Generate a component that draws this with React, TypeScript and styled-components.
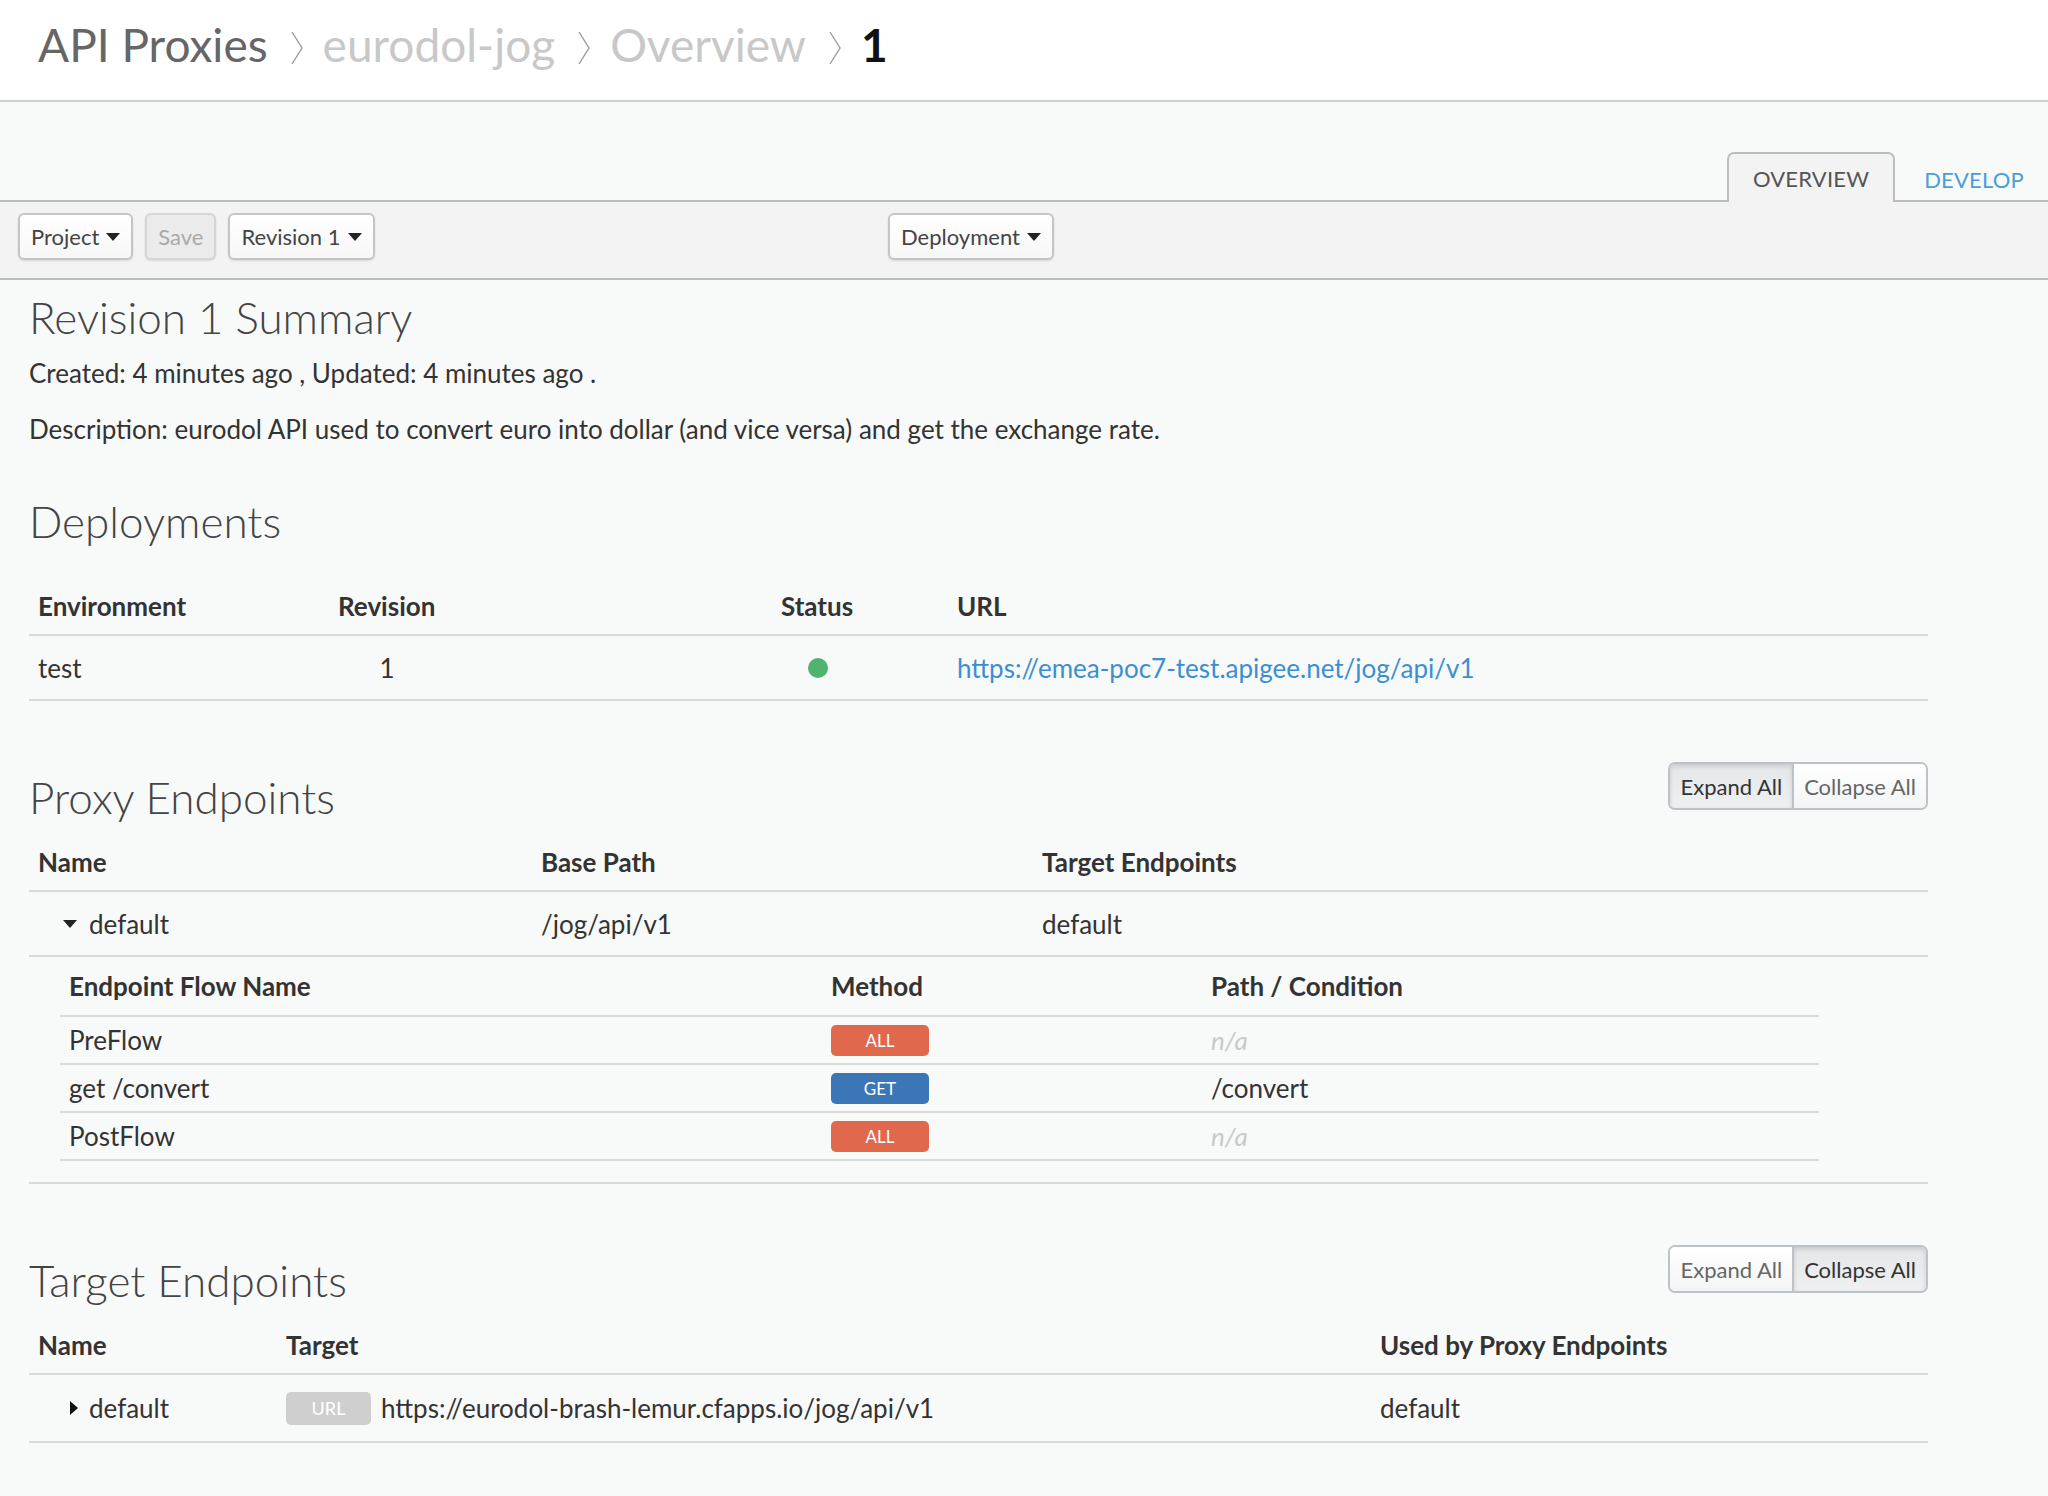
import React from "react"
import styled, { createGlobalStyle, css } from "styled-components"

const GlobalStyle = createGlobalStyle`
    html, body {
        margin: 0;
        padding: 0;
        background: #f8f9f9;
        font-family: Lato, "Open Sans", sans-serif;
        color: #333;
    }
`

const Page = styled.div`
    width: 2048px;
    min-height: 1496px;
    background: #f8f9f9;
`

const Header = styled.header`
    height: 100px;
    background: #fff;
    border-bottom: 2px solid #cdcfd0;
    display: flex;
    align-items: center;
    padding-left: 38px;
`

const Crumb = styled.span<{ $tone: "dark" | "light" | "current" }>`
    font-size: 46px;
    line-height: 1;
    color: ${p => (p.$tone === "dark" ? "#666" : p.$tone === "light" ? "#c8c8c8" : "#111")};
    font-weight: ${p => (p.$tone === "current" ? 700 : 400)};
    margin-top: -10px;
`

const Chevron = styled.svg`
    width: 14px;
    height: 36px;
    margin: -4px 19px 0 22px;
`

const TabBar = styled.nav`
    display: flex;
    justify-content: flex-end;
    align-items: flex-end;
    padding-top: 50px;
    border-bottom: 2px solid #bdbdbd;
`

const Tab = styled.div<{ $active?: boolean }>`
    height: 46px;
    padding: 0 24px;
    display: flex;
    align-items: center;
    font-size: 22px;
    letter-spacing: 0.2px;
    color: #4a9fd6;
    border: 2px solid transparent;
    border-bottom: none;
    margin-left: 3px;
    margin-bottom: -2px;

    &:last-child {
        padding-right: 22px;
    }

    ${p =>
        p.$active &&
        css`
            color: #555;
            background: #f3f3f3;
            border-color: #bdbdbd;
            border-radius: 7px 7px 0 0;
            height: 48px;
        `}
`

const Toolbar = styled.div`
    height: 78px;
    box-sizing: border-box;
    background: #f3f3f3;
    border-bottom: 2px solid #bdbdbd;
    display: flex;
    align-items: flex-start;
    padding: 11px 0 0 18px;
`

const ToolGroup = styled.div<{ $width?: number }>`
    display: flex;
    gap: 12px;
    width: ${p => (p.$width ? `${p.$width}px` : "auto")};
`

const ToolButton = styled.button<{ $disabled?: boolean }>`
    height: 47px;
    padding: 0 11px;
    display: flex;
    align-items: center;
    gap: 7px;
    font-family: Lato, sans-serif;
    font-size: 22px;
    color: ${p => (p.$disabled ? "#a9a9a9" : "#444")};
    background: ${p => (p.$disabled ? "#ebebeb" : "linear-gradient(#fff, #f7f7f7)")};
    border: 2px solid ${p => (p.$disabled ? "#d6d6d6" : "#c2c6c9")};
    border-radius: 6px;
    box-shadow: 0 1px 2px rgba(0, 0, 0, 0.12);
`

const Caret = styled.span<{ $dir?: "down" | "right"; $shift?: number }>`
    display: inline-block;
    width: 0;
    height: 0;
    margin-left: ${p => p.$shift ?? 0}px;
    ${p =>
        p.$dir === "right"
            ? css`
                  border-top: 7px solid transparent;
                  border-bottom: 7px solid transparent;
                  border-left: 8px solid #111;
              `
            : css`
                  border-left: 7px solid transparent;
                  border-right: 7px solid transparent;
                  border-top: 8px solid #222;
              `}
`

const Content = styled.main`
    padding: 13px 120px 60px 29px;
`

const Title = styled.h2`
    margin: 0;
    font-size: 44px;
    line-height: 48px;
    font-weight: 300;
    color: #444;
`

const Meta = styled.p<{ $gap: number }>`
    margin: ${p => p.$gap}px 0 0;
    font-size: 26px;
    line-height: 34px;
    color: #333;
`

const SectionHead = styled.div<{ $gap: number }>`
    display: flex;
    justify-content: space-between;
    align-items: flex-start;
    margin-top: ${p => p.$gap}px;

    & > h2 {
        padding-top: 11px;
    }
`

const ButtonGroup = styled.div`
    display: flex;
    height: 48px;
    border: 2px solid #bcc3c8;
    border-radius: 7px;
    overflow: hidden;
    box-sizing: border-box;
`

const GroupButton = styled.button<{ $active?: boolean }>`
    font-family: Lato, sans-serif;
    font-size: 22px;
    padding: 0 10px;
    border: none;
    color: ${p => (p.$active ? "#333" : "#666")};
    background: ${p => (p.$active ? "linear-gradient(#e4e6e7, #eef0f1)" : "linear-gradient(#fff, #f3f4f4)")};
    box-shadow: ${p => (p.$active ? "inset 0 2px 5px rgba(0,0,0,0.14)" : "none")};

    & + & {
        border-left: 2px solid #bcc3c8;
    }
`

const Grid = styled.div<{ $cols: string; $mt: number }>`
    display: grid;
    grid-template-columns: ${p => p.$cols};
    margin-top: ${p => p.$mt}px;
`

const HeadCell = styled.div<{ $h?: number }>`
    height: ${p => p.$h ?? 56}px;
    display: flex;
    align-items: center;
    padding: 0 9px;
    font-size: 26px;
    font-weight: 700;
    color: #333;
    border-bottom: 2px solid #dadada;
    white-space: nowrap;
`

const Cell = styled.div<{ $h?: number }>`
    height: ${p => p.$h ?? 63}px;
    display: flex;
    align-items: center;
    gap: 10px;
    padding: 0 9px;
    font-size: 26px;
    color: #333;
    border-bottom: 2px solid #dadada;
    white-space: nowrap;
`

const Toggle = styled.span`
    display: inline-flex;
    align-items: center;
    padding-left: 25px;
`

const CaretSlot = styled.span`
    width: 26px;
    display: inline-flex;
    align-items: center;
`

const Centered = styled.span<{ $w: number }>`
    width: ${p => p.$w}px;
    display: flex;
    justify-content: center;
`

const StatusDot = styled.span`
    width: 20px;
    height: 20px;
    border-radius: 50%;
    background: #4eb46e;
`

const Link = styled.a`
    color: #3b8fd1;
    text-decoration: none;
`

const Nested = styled.div`
    grid-column: 1 / -1;
    padding: 0 109px 21px 31px;
    border-bottom: 2px solid #dadada;
`

const Badge = styled.span<{ $kind: "all" | "get" | "url" }>`
    display: inline-flex;
    align-items: center;
    justify-content: center;
    height: 31px;
    width: 98px;
    border-radius: 5px;
    font-size: 17px;
    color: #fff;
    background: ${p => (p.$kind === "all" ? "#e0694d" : p.$kind === "get" ? "#3b76b6" : "#cfcfcf")};
    ${p =>
        p.$kind === "url" &&
        css`
            width: 85px;
            height: 33px;
            font-size: 18px;
        `}
`

const Muted = styled.span`
    color: #c9c9c9;
    font-style: italic;
`

const flows = [
    { name: "PreFlow", method: "all" as const, path: null },
    { name: "get /convert", method: "get" as const, path: "/convert" },
    { name: "PostFlow", method: "all" as const, path: null },
]

const Sep = () => (
    <Chevron viewBox="0 0 14 36">
        <polyline points="2,2 12,18 2,34" fill="none" stroke="#9a9a9a" strokeWidth="1.4" />
    </Chevron>
)

const App = () => {
    return (
        <Page>
            <GlobalStyle />
            <Header>
                <Crumb $tone="dark">API Proxies</Crumb>
                <Sep />
                <Crumb $tone="light">eurodol-jog</Crumb>
                <Sep />
                <Crumb $tone="light">Overview</Crumb>
                <Sep />
                <Crumb $tone="current">1</Crumb>
            </Header>

            <TabBar>
                <Tab $active>OVERVIEW</Tab>
                <Tab>DEVELOP</Tab>
            </TabBar>

            <Toolbar>
                <ToolGroup $width={870}>
                    <ToolButton>
                        Project <Caret />
                    </ToolButton>
                    <ToolButton $disabled>Save</ToolButton>
                    <ToolButton>
                        Revision 1 <Caret />
                    </ToolButton>
                </ToolGroup>
                <ToolGroup>
                    <ToolButton>
                        Deployment <Caret />
                    </ToolButton>
                </ToolGroup>
            </Toolbar>

            <Content>
                <Title>Revision 1 Summary</Title>
                <Meta $gap={15}>Created: 4 minutes ago , Updated: 4 minutes ago .</Meta>
                <Meta $gap={22}>
                    Description: eurodol API used to convert euro into dollar (and vice versa) and get the exchange rate.
                </Meta>

                <SectionHead $gap={40}>
                    <Title>Deployments</Title>
                </SectionHead>
                <Grid $cols="300px 443px 176px 1fr" $mt={33}>
                    <HeadCell>Environment</HeadCell>
                    <HeadCell>Revision</HeadCell>
                    <HeadCell>Status</HeadCell>
                    <HeadCell>URL</HeadCell>
                    <Cell>test</Cell>
                    <Cell>
                        <Centered $w={98}>1</Centered>
                    </Cell>
                    <Cell>
                        <Centered $w={74}>
                            <StatusDot />
                        </Centered>
                    </Cell>
                    <Cell>
                        <Link href="#">https://emea-poc7-test.apigee.net/jog/api/v1</Link>
                    </Cell>
                </Grid>

                <SectionHead $gap={61}>
                    <Title>Proxy Endpoints</Title>
                    <ButtonGroup>
                        <GroupButton $active>Expand All</GroupButton>
                        <GroupButton>Collapse All</GroupButton>
                    </ButtonGroup>
                </SectionHead>
                <Grid $cols="503px 501px 1fr" $mt={13}>
                    <HeadCell>Name</HeadCell>
                    <HeadCell>Base Path</HeadCell>
                    <HeadCell>Target Endpoints</HeadCell>
                    <Cell>
                        <Toggle>
                            <CaretSlot>
                                <Caret />
                            </CaretSlot>
                            default
                        </Toggle>
                    </Cell>
                    <Cell>/jog/api/v1</Cell>
                    <Cell>default</Cell>
                    <Nested>
                        <Grid $cols="762px 380px 1fr" $mt={0}>
                            <HeadCell $h={58}>Endpoint Flow Name</HeadCell>
                            <HeadCell $h={58}>Method</HeadCell>
                            <HeadCell $h={58}>Path / Condition</HeadCell>
                            {flows.map(f => (
                                <React.Fragment key={f.name}>
                                    <Cell $h={46}>{f.name}</Cell>
                                    <Cell $h={46}>
                                        <Badge $kind={f.method}>{f.method.toUpperCase()}</Badge>
                                    </Cell>
                                    <Cell $h={46}>{f.path ?? <Muted>n/a</Muted>}</Cell>
                                </React.Fragment>
                            ))}
                        </Grid>
                    </Nested>
                </Grid>

                <SectionHead $gap={61}>
                    <Title>Target Endpoints</Title>
                    <ButtonGroup>
                        <GroupButton>Expand All</GroupButton>
                        <GroupButton $active>Collapse All</GroupButton>
                    </ButtonGroup>
                </SectionHead>
                <Grid $cols="248px 1094px 1fr" $mt={13}>
                    <HeadCell>Name</HeadCell>
                    <HeadCell>Target</HeadCell>
                    <HeadCell>Used by Proxy Endpoints</HeadCell>
                    <Cell $h={66}>
                        <Toggle>
                            <CaretSlot>
                                <Caret $dir="right" $shift={7} />
                            </CaretSlot>
                            default
                        </Toggle>
                    </Cell>
                    <Cell $h={66}>
                        <Badge $kind="url">URL</Badge>
                        https://eurodol-brash-lemur.cfapps.io/jog/api/v1
                    </Cell>
                    <Cell $h={66}>default</Cell>
                </Grid>
            </Content>
        </Page>
    )
}

export default App
